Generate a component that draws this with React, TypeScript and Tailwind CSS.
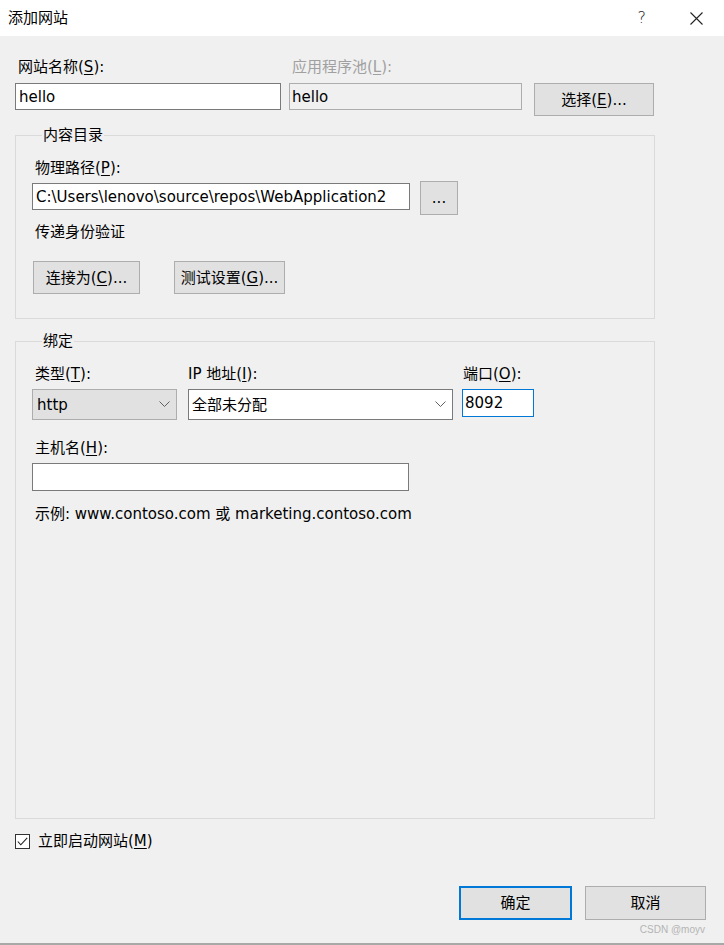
import type { ReactNode } from "react";

const FONT = '"DejaVu Sans", "Noto Sans CJK SC", sans-serif';

function Key({ k }: { k: string }) {
  return <u className="underline underline-offset-2">{k}</u>;
}

function Chevron() {
  return (
    <svg width="11" height="7" viewBox="0 0 11 7" className="shrink-0">
      <polyline points="0.5,0.5 5.5,5.5 10.5,0.5" fill="none" stroke="#606060" strokeWidth="1" />
    </svg>
  );
}

function Btn({
  children,
  className = "",
  primary = false,
}: {
  children: ReactNode;
  className?: string;
  primary?: boolean;
}) {
  return (
    <button
      className={
        "flex items-center justify-center bg-[#e1e1e1] text-[15px] text-black " +
        (primary ? "border-2 border-[#0078d7] " : "border border-[#adadad] ") +
        className
      }
    >
      {children}
    </button>
  );
}

function Group({ title, children, className = "" }: { title: string; children: ReactNode; className?: string }) {
  return (
    <fieldset className={"w-[640px] border border-[#dadada] pl-[16px] " + className}>
      <legend className="ml-[10px] px-[1px] text-[15px] leading-[20px]">{title}</legend>
      {children}
    </fieldset>
  );
}

export default function App() {
  return (
    <div
      className="relative flex h-[945px] w-[724px] flex-col bg-[#f0f0f0] text-[15px] leading-[20px] text-black"
      style={{ fontFamily: FONT }}
    >
      {/* title bar */}
      <div className="flex h-[36px] shrink-0 items-center bg-white pl-[8px]">
        <span className="text-[15px]">添加网站</span>
        <span className="ml-auto mr-[44px] text-[16px] font-light text-[#222]">?</span>
        <svg width="13" height="13" viewBox="0 0 13 13" className="mr-[21px]">
          <path d="M0.5 0.5 L12.5 12.5 M12.5 0.5 L0.5 12.5" stroke="#222" strokeWidth="1.1" />
        </svg>
      </div>

      <div className="flex flex-1 flex-col px-[15px]">
        {/* site name row */}
        <div className="mt-[21px] flex">
          <div className="flex w-[266px] flex-col">
            <span className="pl-[3px]">
              网站名称(<Key k="S" />):
            </span>
            <div className="mt-[6px] flex h-[27px] items-center border border-[#7a7a7a] bg-white pl-[3px]">hello</div>
          </div>
          <div className="ml-[8px] flex w-[233px] flex-col">
            <span className="pl-[3px] text-[#a0a0a0]">
              应用程序池(<Key k="L" />):
            </span>
            <div className="mt-[6px] flex h-[27px] items-center border border-[#adadad] bg-[#f0f0f0] pl-[2px]">hello</div>
          </div>
          <Btn className="ml-[12px] mt-[26px] h-[33px] w-[120px]">
            选择(<Key k="E" />)...
          </Btn>
        </div>

        {/* content directory */}
        <Group title="内容目录" className="mt-[9px] pb-[24px]">
          <div className="mt-[13px] pl-[3px]">
            物理路径(<Key k="P" />):
          </div>
          <div className="mt-[3px] flex items-start">
            <div className="mt-[2px] flex h-[27px] w-[378px] items-center border border-[#7a7a7a] bg-white pl-[3px]">
              C:\Users\lenovo\source\repos\WebApplication2
            </div>
            <Btn className="ml-[10px] h-[34px] w-[38px] text-[12px]">...</Btn>
          </div>
          <div className="mt-[7px] pl-[3px]">传递身份验证</div>
          <div className="mt-[19px] flex">
            <Btn className="ml-[1px] h-[33px] w-[107px]">
              连接为(<Key k="C" />)...
            </Btn>
            <Btn className="ml-[34px] h-[33px] w-[111px]">
              测试设置(<Key k="G" />)...
            </Btn>
          </div>
        </Group>

        {/* binding */}
        <Group title="绑定" className="mt-[12px] h-[488px]">
          <div className="mt-[13px] flex">
            <div className="flex w-[145px] flex-col">
              <span className="pl-[3px]">
                类型(<Key k="T" />):
              </span>
              <div className="mt-[5px] flex h-[31px] items-center justify-between border border-[#adadad] bg-[#e1e1e1] pl-[4px] pr-[6px]">
                <span>http</span>
                <Chevron />
              </div>
            </div>
            <div className="ml-[11px] flex w-[265px] flex-col">
              <span>
                IP 地址(<Key k="I" />):
              </span>
              <div className="mt-[5px] flex h-[31px] items-center justify-between border border-[#7a7a7a] bg-white pl-[3px] pr-[6px]">
                <span>全部未分配</span>
                <Chevron />
              </div>
            </div>
            <div className="ml-[9px] flex w-[72px] flex-col">
              <span className="pl-[1px]">
                端口(<Key k="O" />):
              </span>
              <div className="mt-[5px] flex h-[28px] items-center border border-[#0078d7] bg-white pl-[2px]">8092</div>
            </div>
          </div>
          <div className="mt-[18px] pl-[3px]">
            主机名(<Key k="H" />):
          </div>
          <div className="mt-[5px] h-[28px] w-[377px] border border-[#7a7a7a] bg-white" />
          <div className="mt-[13px] pl-[3px]">示例: www.contoso.com 或 marketing.contoso.com</div>
        </Group>

        {/* start checkbox */}
        <div className="mt-[12px] flex items-center">
          <div className="flex h-[15px] w-[15px] items-center justify-center border border-[#333] bg-white">
            <svg width="11" height="9" viewBox="0 0 11 9">
              <polyline points="0.8,4.5 3.8,7.8 10.2,0.8" fill="none" stroke="#222" strokeWidth="1.1" />
            </svg>
          </div>
          <span className="ml-[8px]">
            立即启动网站(<Key k="M" />)
          </span>
        </div>

        {/* footer buttons */}
        <div className="mt-auto mb-[23px] flex justify-end pr-[3px]">
          <Btn primary className="h-[34px] w-[113px]">
            确定
          </Btn>
          <Btn className="ml-[13px] h-[34px] w-[121px]">取消</Btn>
        </div>
      </div>

      <span
        className="absolute bottom-[9px] right-[19px] text-[10px] leading-[12px] text-[#b4b4b4]"
        style={{ fontFamily: '"Liberation Sans", sans-serif' }}
      >
        CSDN @moyv
      </span>
      <div className="h-[2px] shrink-0 bg-[#a8a8a8]" />
    </div>
  );
}
